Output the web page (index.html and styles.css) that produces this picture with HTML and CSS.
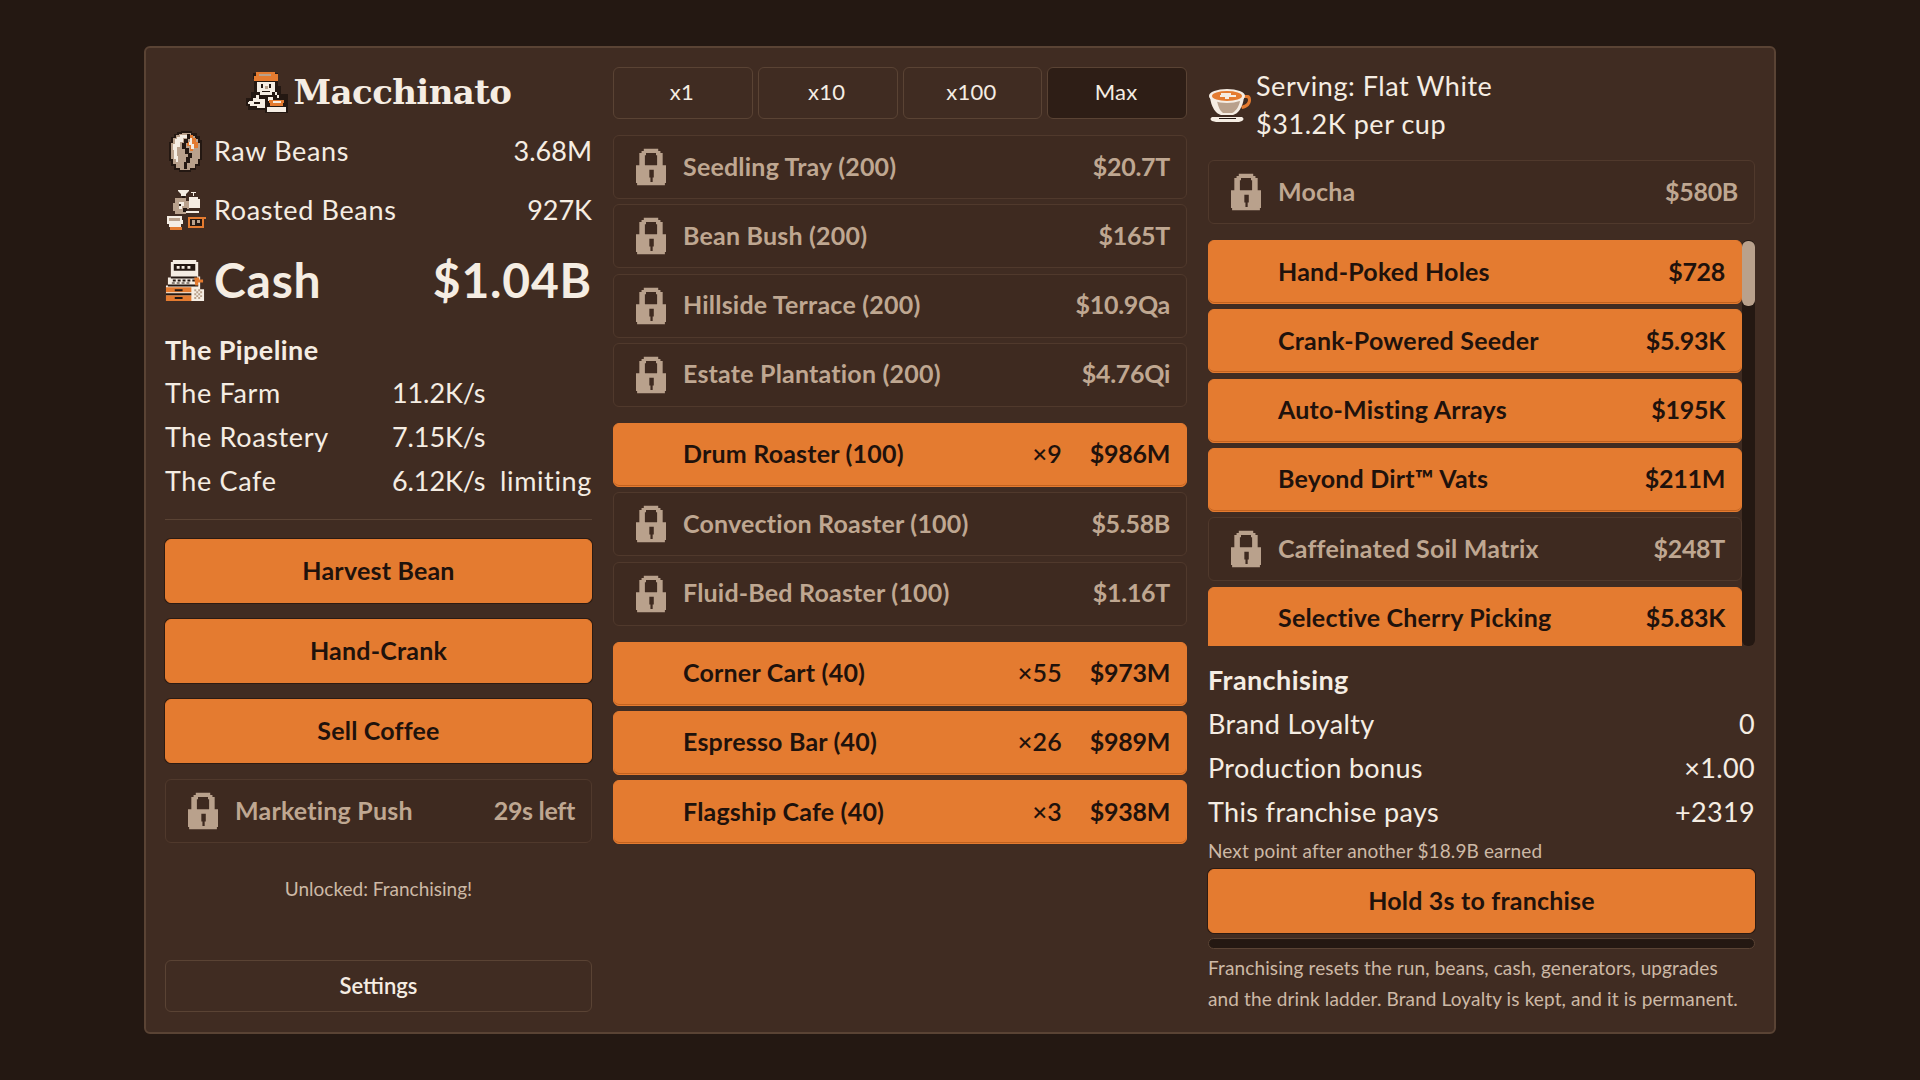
FILE: index.html
```html
<!DOCTYPE html>
<html lang="en">
<head>
<meta charset="utf-8">
<title>Macchinato</title>
<link rel="stylesheet" href="styles.css">
</head>
<body>
<svg class="defs" width="0" height="0" aria-hidden="true">
  <symbol id="lock" viewBox="0 0 27 33">
    <path fill-rule="evenodd" d="M7 0h13v2h2v2h2v11h3v16h-1v2H1v-2H0V15h3V4h2V2h2zM9 4v2H8v9h11V6h-1V4z M12 19v7h1v4h2v-4h1v-7z"/>
  </symbol>
</svg>
<main class="panel">
  <section class="col col-left">
    <h1 class="title">
      <svg class="logo" viewBox="0 0 42 42">
        <path fill="#241812" d="M7 2h25v13h3v8h7v19H19v-3H2v-4H0v-8h5v-6h3V8H7z"/>
        <path fill="#e47b30" d="M10 1h19v2h3v7H8V5h2z"/>
        <path fill="#b9a18c" d="M13 3h12v2H13z"/>
        <path fill="#f5ede3" d="M11 11h18v10h-3v3H14v-3h-3z"/>
        <path fill="#241812" d="M15 13h2v4h-2zM23 13h2v4h-2zM16 20h8v1h-8z"/>
        <path fill="#b9a18c" d="M19 15h3v3h-3z"/>
        <path fill="#f5ede3" d="M3 30h4v-3h3v-3h3v4h6v9h-8v-2H4v-2H2v-2h1z"/>
        <path fill="#241812" d="M8 31h6v2H8zM13 26h10v2H13z"/>
        <path fill="#f5ede3" d="M22 26h5v4h-5zM21 36h19v5H21z"/>
        <path fill="#e47b30" d="M23 29h15v3h-1v3H24v-3h-1z"/>
        <path fill="#f5ede3" d="M27 30h8v2h-8zM29 21h2v3h2v3h-2v-3h-2z"/>
      </svg>
      <span>Macchinato</span>
    </h1>
    <div class="stat">
      <svg class="stat-icon" viewBox="0 0 42 42">
        <path fill="#241812" d="M16 0h11v2h5v3h3v4h2v20h-2v6h-4v4h-5v2H14v-2H9v-4H6v-5H4V11h2V6h3V3h3V1h4z"/>
        <path fill="#b9a18c" d="M17 2h9v3h4v3h3v4h2v16h-2v5h-3v4h-5v2H15v-2h-4v-4H8v-5H6V12h2V7h3V4h3V3h3z"/>
        <path fill="#f5ede3" d="M15 4h7v3h-4v4h-3v5h-3v9h1v6h-2v-3H9v-9H8v-6h2V8h2V6h3z"/>
        <path fill="#e47b30" d="M25 4h3v3h3v4h2v6h-5v3h-3v-5h-3v-4h3z"/>
        <path fill="#f5ede3" d="M25 7h2v6h2v5h-3v-4h-2v-3h1z"/>
        <path fill="#241812" d="M22 3h3v5h-2v4h-2v5h3v5h3v5h-2v5h-3v6h-3v-7h2v-5h2v-3h-3v-5h-3v-6h2V8h3z"/>
      </svg>
      <span class="stat-label">Raw Beans</span><span class="stat-value">3.68M</span>
    </div>
    <div class="stat">
      <svg class="stat-icon" viewBox="0 0 42 42">
        <path fill="#f5ede3" d="M13 0h11v1l-3 3v2h-5V4l-3-3z"/>
        <path fill="#241812" d="M17 6h3v2h-3z"/>
        <path fill="#f5ede3" d="M26 2h5v1h-2v3h-1V3h-2zM24 7h9v2h2v9h-11z"/>
        <path fill="#b9a18c" d="M10 8h11v3h3v8h-3v5H10v-3H8v-8h2z"/>
        <path fill="#f5ede3" d="M14 12h5v4h-2v3h-3z"/>
        <path fill="#241812" d="M14 14h2v2h-2zM18 18h4v4h-4z"/>
        <path fill="#f5ede3" d="M21 21h13v2H21zM2 26h15v4h1v4h-2v3H4v-3H2z"/>
        <path fill="#b9a18c" d="M4 28h11v3H4z"/>
        <path fill="#e47b30" d="M5 37h12v3H5zM23 27h18v2h-2v9H23z"/>
        <path fill="#241812" d="M25 29h12v7H25z"/>
        <path fill="#b9a18c" d="M27 30h3v5h-3zM32 30h3v3h-3z"/>
      </svg>
      <span class="stat-label">Roasted Beans</span><span class="stat-value">927K</span>
    </div>
    <div class="cash">
      <svg class="cash-icon" viewBox="0 0 42 44">
        <path fill="#f5ede3" d="M8 0h24v2h2v15h2v13h4v12H1V26h2v-8h3V2h2z"/>
        <path fill="#241812" d="M9 4h22v7H9zM6 17h27v2H6zM3 25h31v2H3z"/>
        <path fill="#f5ede3" d="M12 6h3v3h-3zM17 6h3v3h-3zM23 6h3v3h-3z"/>
        <path fill="#241812" d="M8 20h3v2H8zM13 20h3v2h-3zM18 20h3v2h-3zM23 20h3v2h-3zM28 20h3v2h-3zM7 23h3v1H7zM12 23h3v1h-3zM17 23h3v1h-3zM22 23h3v1h-3z"/>
        <path fill="#e47b30" d="M1 28h26v5H1zM1 36h26v6H1zM30 18h5v2h4v3h-5v3h-3z"/>
        <path fill="#241812" d="M10 30h8v2h-8zM10 38h8v2h-8zM1 34h26v2H1z"/>
        <path fill="#b9a18c" d="M30 30h2v2h-2zM34 30h2v2h-2zM32 32h2v2h-2zM36 32h2v2h-2zM30 34h2v2h-2zM34 34h2v2h-2zM32 36h2v2h-2zM36 36h2v2h-2zM30 38h2v2h-2zM34 38h2v2h-2z"/>
      </svg>
      <span class="cash-label">Cash</span><span class="cash-value">$1.04B</span>
    </div>
    <h2 class="heading pipeline-heading">The Pipeline</h2>
    <div class="pipe"><span class="pipe-name">The Farm</span><span class="pipe-rate">11.2K/s</span></div>
    <div class="pipe"><span class="pipe-name">The Roastery</span><span class="pipe-rate">7.15K/s</span></div>
    <div class="pipe"><span class="pipe-name">The Cafe</span><span class="pipe-rate">6.12K/s</span><span class="pipe-note">limiting</span></div>
    <hr class="rule">
    <div class="actions">
      <button class="btn">Harvest Bean</button>
      <button class="btn">Hand-Crank</button>
      <button class="btn">Sell Coffee</button>
      <div class="row locked"><svg class="lock"><use href="#lock"/></svg><span class="row-name">Marketing Push</span><span class="row-cost">29s left</span></div>
    </div>
    <p class="toast">Unlocked: Franchising!</p>
    <button class="settings">Settings</button>
  </section>

  <section class="col col-mid">
    <div class="tabs">
      <button class="tab">x1</button>
      <button class="tab">x10</button>
      <button class="tab">x100</button>
      <button class="tab active">Max</button>
    </div>
    <div class="group">
      <div class="row locked"><svg class="lock"><use href="#lock"/></svg><span class="row-name">Seedling Tray (200)</span><span class="row-cost">$20.7T</span></div>
      <div class="row locked"><svg class="lock"><use href="#lock"/></svg><span class="row-name">Bean Bush (200)</span><span class="row-cost">$165T</span></div>
      <div class="row locked"><svg class="lock"><use href="#lock"/></svg><span class="row-name">Hillside Terrace (200)</span><span class="row-cost">$10.9Qa</span></div>
      <div class="row locked"><svg class="lock"><use href="#lock"/></svg><span class="row-name">Estate Plantation (200)</span><span class="row-cost">$4.76Qi</span></div>
    </div>
    <div class="group">
      <div class="row buy"><span class="row-name">Drum Roaster (100)</span><span class="row-qty">×9</span><span class="row-cost">$986M</span></div>
      <div class="row locked"><svg class="lock"><use href="#lock"/></svg><span class="row-name">Convection Roaster (100)</span><span class="row-cost">$5.58B</span></div>
      <div class="row locked"><svg class="lock"><use href="#lock"/></svg><span class="row-name">Fluid-Bed Roaster (100)</span><span class="row-cost">$1.16T</span></div>
    </div>
    <div class="group">
      <div class="row buy"><span class="row-name">Corner Cart (40)</span><span class="row-qty">×55</span><span class="row-cost">$973M</span></div>
      <div class="row buy"><span class="row-name">Espresso Bar (40)</span><span class="row-qty">×26</span><span class="row-cost">$989M</span></div>
      <div class="row buy"><span class="row-name">Flagship Cafe (40)</span><span class="row-qty">×3</span><span class="row-cost">$938M</span></div>
    </div>
  </section>

  <section class="col col-right">
    <div class="serving">
      <svg class="cup" viewBox="0 0 44 34">
        <path fill="#e47b30" d="M33 6h6c3 0 4 2 4 5 0 4-3 8-9 9l-1-3c4-1 7-3 7-6 0-2-1-2-3-2h-4z"/>
        <path fill="#f5ede3" d="M2 8C3 18 8 25 13 26h12c5-1 10-8 11-18z"/>
        <path fill="#b9a18c" d="M9 12h23c-1 6-5 11-8 12H15c-3-2-5-7-6-12z"/>
        <ellipse cx="19" cy="7" rx="18" ry="7" fill="#f5ede3"/>
        <ellipse cx="19" cy="7" rx="15" ry="5" fill="#e47b30"/>
        <path fill="#f5ede3" d="M13 4h10v2h5v2h-7v2h-4V8h-5V6h1z"/>
        <path fill="#f5ede3" d="M4 28h30c2 1 2 3 0 4l-3 1H8l-4-1c-2-1-2-3 0-4z"/>
        <path fill="#241812" d="M11 29h17v1H11z"/>
      </svg>
      <div class="serving-text"><div>Serving: Flat White</div><div>$31.2K per cup</div></div>
    </div>
    <div class="row locked"><svg class="lock"><use href="#lock"/></svg><span class="row-name">Mocha</span><span class="row-cost">$580B</span></div>
    <div class="upgrades">
      <div class="upgrade-list">
        <div class="row buy"><span class="row-name">Hand-Poked Holes</span><span class="row-cost">$728</span></div>
        <div class="row buy"><span class="row-name">Crank-Powered Seeder</span><span class="row-cost">$5.93K</span></div>
        <div class="row buy"><span class="row-name">Auto-Misting Arrays</span><span class="row-cost">$195K</span></div>
        <div class="row buy"><span class="row-name">Beyond Dirt™ Vats</span><span class="row-cost">$211M</span></div>
        <div class="row locked"><svg class="lock"><use href="#lock"/></svg><span class="row-name">Caffeinated Soil Matrix</span><span class="row-cost">$248T</span></div>
        <div class="row buy"><span class="row-name">Selective Cherry Picking</span><span class="row-cost">$5.83K</span></div>
      </div>
      <div class="scrollbar"><div class="thumb"></div></div>
    </div>
    <h2 class="heading franchise-heading">Franchising</h2>
    <div class="kv"><span>Brand Loyalty</span><span>0</span></div>
    <div class="kv"><span>Production bonus</span><span>×1.00</span></div>
    <div class="kv"><span>This franchise pays</span><span>+2319</span></div>
    <p class="next">Next point after another $18.9B earned</p>
    <button class="btn hold">Hold 3s to franchise</button>
    <div class="progress"></div>
    <p class="fine">Franchising resets the run, beans, cash, generators, upgrades and the drink ladder. Brand Loyalty is kept, and it is permanent.</p>
  </section>
</main>
</body>
</html>
```
FILE: styles.css
```css
* { box-sizing: border-box; }
html, body { height: 100%; }
body {
  margin: 0;
  display: flex;
  align-items: center;
  justify-content: center;
  background: #241812;
  color: #f5ede3;
  font-family: "Lato", "Noto Sans", sans-serif;
}
.defs { position: absolute; }
button { font-family: inherit; cursor: pointer; }

.panel {
  width: 1632px;
  height: 988px;
  padding: 19px 19px 20px;
  display: grid;
  grid-template-columns: 427px 574px 547px;
  grid-template-rows: minmax(0, 1fr);
  column-gap: 21px;
  background: #402c22;
  border: 2px solid #5a4334;
  border-radius: 6px;
}
.col { display: flex; flex-direction: column; min-width: 0; }
.col > * { flex: none; }

.title {
  height: 48px;
  margin: 1px 0 6px;
  display: flex;
  align-items: center;
  justify-content: center;
  gap: 6px;
  font-family: "DejaVu Serif", serif;
  font-size: 34px;
  font-weight: 700;
  letter-spacing: -0.6px;
}
.logo { width: 42px; height: 42px; flex: none; }

.stat { height: 59px; padding-bottom: 3px; display: flex; align-items: center; font-size: 27px; letter-spacing: 0.65px; }
.stat-icon { width: 42px; height: 42px; margin: 3px 7px 0 0; flex: none; }
.stat-label { flex: 1; }
.stat-value { letter-spacing: 0; }

.cash { height: 60px; padding-bottom: 3px; margin-top: 11px; display: flex; align-items: center; font-size: 48px; font-weight: 700; letter-spacing: 0.8px; }
.cash-icon { width: 41px; height: 43px; margin: 3px 8px 0 0; flex: none; }
.cash-label { flex: 1; }

.heading { margin: 0; font-size: 27px; font-weight: 700; line-height: 44px; letter-spacing: 0.4px; }
.pipeline-heading { margin-top: 17px; }
.pipe { height: 44px; padding-bottom: 4px; display: flex; align-items: center; font-size: 27px; letter-spacing: 0.65px; }
.pipe-name { width: 227px; }
.pipe-rate { width: 107px; letter-spacing: -0.1px; }
.pipe-note { margin-left: auto; }

.rule { width: 100%; height: 1px; margin: 15px 0 19px; border: 0; background: #5a4334; }

.actions { display: flex; flex-direction: column; gap: 16px; }

.btn {
  height: 64px;
  width: 100%;
  padding: 0 0 3px;
  background: #e47b30;
  border: 1px solid #e47b30;
  border-radius: 6px;
  box-shadow: 0 0 0 1px #2c1b12;
  color: #1f120c;
  font-size: 25px;
  font-weight: 700;
  letter-spacing: 0.2px;
}

.row {
  height: 64px;
  flex: none;
  display: flex;
  align-items: center;
  padding: 0 16px 3px 69px;
  border-radius: 6px;
  font-size: 25px;
  font-weight: 700;
  letter-spacing: 0.2px;
}
.row-name { flex: 1; white-space: nowrap; }
.row-cost { letter-spacing: -0.3px; }
.row-qty { margin-right: 28px; font-weight: 600; }
.locked {
  position: relative;
  color: #bfa791;
  border: 1px solid #50392c;
  background: #3e2a20;
}
.lock { position: absolute; left: 22px; top: 12px; width: 30px; height: 38px; fill: #b9a18c; }
.buy {
  color: #1f120c;
  background: #e47b30;
  border: 1px solid #e47b30;
  box-shadow: inset 0 -1px 0 #c2621f;
}

.toast { margin: 0; padding-top: 34px; text-align: center; font-size: 19px; line-height: 24px; color: #cdb9a6; }
.settings {
  margin-top: auto;
  height: 52px;
  padding: 0 0 2px;
  background: transparent;
  border: 1px solid #5a4334;
  border-radius: 6px;
  color: #f5ede3;
  font-size: 22px;
  font-weight: 600;
}

.tabs { display: grid; grid-template-columns: repeat(4, 1fr); gap: 5px; margin-bottom: 16px; }
.tab {
  height: 52px;
  padding: 0 2px 4px 0;
  background: transparent;
  border: 1px solid #5a4334;
  border-radius: 6px;
  color: #f5ede3;
  font-size: 22px;
  letter-spacing: 0.2px;
}
.tab.active { background: #2e1e16; }
.group { display: flex; flex-direction: column; gap: 5.33px; margin-bottom: 16px; }

.serving { height: 76px; display: flex; align-items: center; margin-bottom: 17px; font-size: 27px; line-height: 38px; letter-spacing: 0.55px; }
.cup { width: 44px; height: 34px; margin: 2px 4px 0 0; flex: none; }

.upgrades { height: 406px; margin-top: 16px; display: flex; }
.upgrade-list { flex: 1; min-width: 0; display: flex; flex-direction: column; gap: 5.33px; overflow: hidden; }
.scrollbar { width: 13px; background: #241812; border-radius: 6px; }
.thumb { height: 65px; margin-top: 1px; background: #b9a18c; border-radius: 6px; }

.franchise-heading { margin-top: 12px; }
.kv { height: 44px; padding-bottom: 1px; display: flex; align-items: center; justify-content: space-between; font-size: 27px; letter-spacing: 0.35px; }
.next { margin: 0; height: 35px; font-size: 19px; line-height: 34px; color: #cdb9a6; letter-spacing: 0.1px; }
.hold { height: 64px; }
.progress { height: 11px; margin-top: 5px; background: #241812; border: 1px solid #5a4334; border-radius: 6px; }
.fine { margin: 4px 0 0; padding-right: 8px; font-size: 19px; line-height: 30.6px; color: #cdb9a6; letter-spacing: 0.12px; }
```
